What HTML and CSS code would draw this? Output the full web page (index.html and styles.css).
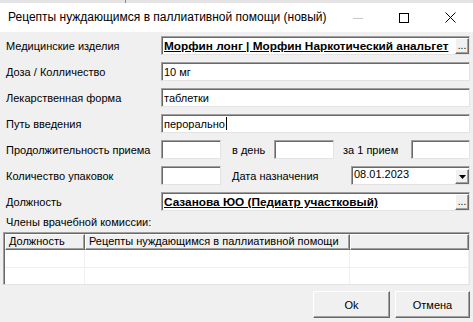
FILE: index.html
```html
<!DOCTYPE html>
<html lang="ru">
<head>
    <meta charset="UTF-8">
    <title>Рецепты нуждающимся в паллиативной помощи (новый)</title>
    <link rel="stylesheet" href="styles.css">
</head>
<body>
    <div class="window">
        <div class="behind"><span class="behind-line"></span></div>
        <div class="titlebar">
            <span class="title">Рецепты нуждающимся в паллиативной помощи (новый)</span>
            <div class="controls">
                <span class="ctl ctl-min">
                    <svg width="10" height="10" viewBox="0 0 10 10"><path d="M0 5.5h10" stroke="#c8c8c8" stroke-width="1"/></svg>
                </span>
                <span class="ctl">
                    <svg width="10" height="10" viewBox="0 0 10 10"><rect x="0.5" y="0.5" width="9" height="9" fill="none" stroke="#000" stroke-width="1"/></svg>
                </span>
                <span class="ctl">
                    <svg width="11" height="11" viewBox="0 0 11 11"><path d="M0.5 0.5l10 10M10.5 0.5l-10 10" stroke="#000" stroke-width="1"/></svg>
                </span>
            </div>
        </div>

        <div class="form">
            <div class="row">
                <span class="label">Медицинские изделия</span>
                <div class="field lookup">
                    <span class="link">Морфин лонг | Морфин Наркотический анальгет</span>
                    <span class="dots">...</span>
                </div>
            </div>
            <div class="row">
                <span class="label">Доза / Колличество</span>
                <div class="field">10 мг</div>
            </div>
            <div class="row">
                <span class="label">Лекарственная форма</span>
                <div class="field">таблетки</div>
            </div>
            <div class="row">
                <span class="label">Путь введения</span>
                <div class="field">перорально<span class="caret"></span></div>
            </div>
            <div class="row">
                <span class="label">Продолжительность приема</span>
                <div class="field small"></div>
                <span class="inline-label">в день</span>
                <div class="field small"></div>
                <span class="inline-label wide">за 1 прием</span>
                <div class="field small last"></div>
            </div>
            <div class="row">
                <span class="label">Количество упаковок</span>
                <div class="field small"></div>
                <span class="inline-label date-label">Дата назначения</span>
                <div class="field date">
                    <span class="date-text">08.01.2023</span>
                    <span class="drop">
                        <svg width="7" height="4" viewBox="0 0 7 4"><path d="M0 0h7L3.5 4z" fill="#000"/></svg>
                    </span>
                </div>
            </div>
            <div class="row">
                <span class="label">Должность</span>
                <div class="field lookup">
                    <span class="link">Сазанова ЮО (Педиатр участковый)</span>
                    <span class="dots">...</span>
                </div>
            </div>

            <div class="section-label">Члены врачебной комиссии:</div>

            <div class="grid">
                <div class="grid-head">
                    <span class="col col-1">Должность</span>
                    <span class="col col-2">Рецепты нуждающимся в паллиативной помощи</span>
                    <span class="col col-3"></span>
                </div>
                <div class="grid-row">
                    <span class="cell col-1"></span>
                    <span class="cell col-2"></span>
                    <span class="cell col-3"></span>
                </div>
                <div class="grid-row">
                    <span class="cell col-1"></span>
                    <span class="cell col-2"></span>
                    <span class="cell col-3"></span>
                </div>
            </div>

            <div class="buttons">
                <button class="btn btn-ok">Ok</button>
                <button class="btn btn-cancel">Отмена</button>
            </div>
        </div>
    </div>
</body>
</html>
```

FILE: styles.css
```css
body {
    margin: 0;
    font-family: 'Liberation Sans', Arial, sans-serif;
    font-size: 11px;
    color: #000;
    background-color: #f0f0f0;
}

.window {
    width: 473px;
    height: 322px;
    background-color: #f0f0f0;
    overflow: hidden;
}

.behind {
    height: 3px;
    background-color: #e4e4e4;
    position: relative;
}

.behind-line {
    position: absolute;
    left: 125px;
    top: 0;
    width: 1px;
    height: 3px;
    background-color: #8a8a8a;
}

.titlebar {
    height: 29px;
    background-color: #fff;
    display: flex;
    align-items: center;
    padding-left: 8px;
}

.title {
    font-family: 'Liberation Sans', Arial, sans-serif;
    font-size: 12px;
    flex: 1;
    white-space: nowrap;
    padding-bottom: 1px;
}

.controls {
    display: flex;
    align-items: center;
}

.ctl {
    width: 46px;
    height: 29px;
    display: flex;
    align-items: center;
    justify-content: center;
}

.form {
    padding: 4px 3px 0 6px;
}

.row {
    display: flex;
    align-items: center;
    height: 19px;
    margin-bottom: 7px;
}

.label {
    width: 155px;
    flex-shrink: 0;
}

.field {
    flex: 1;
    height: 19px;
    box-sizing: border-box;
    background-color: #fff;
    border: 1px solid;
    border-color: #a0a0a0 #e3e3e3 #e3e3e3 #a0a0a0;
    box-shadow: inset 1px 1px 0 #696969;
    padding: 2px 0 0 2px;
    line-height: 14px;
    white-space: nowrap;
    overflow: hidden;
    display: flex;
    align-items: flex-start;
}

.caret {
    display: inline-block;
    width: 1px;
    height: 13px;
    background-color: #000;
    margin-left: 1px;
}

.lookup {
    padding-right: 0;
}

.link {
    flex: 1;
    min-width: 0;
    font-size: 11.8px;
    font-weight: bold;
    text-decoration: underline;
    white-space: nowrap;
}

.dots {
    width: 14px;
    height: 16px;
    margin-top: -1px;
    box-sizing: border-box;
    flex-shrink: 0;
    background-color: #f0f0f0;
    border: 1px solid;
    border-color: #fff #696969 #696969 #fff;
    box-shadow: inset -1px -1px 0 #a0a0a0;
    font-size: 10px;
    line-height: 14px;
    text-align: center;
    color: #000;
}

.field.small {
    flex: 0 0 60px;
}

.field.last {
    flex-basis: 59px;
}

.inline-label {
    margin-left: 11px;
    width: 42px;
}

.inline-label.wide {
    margin-left: 9px;
    width: 68px;
}

.inline-label.date-label {
    width: 119px;
}

.field.date {
    padding-right: 0;
}

.date-text {
    flex: 1;
    font-size: 11px;
    line-height: 13px;
    margin-top: -1px;
}

.drop {
    width: 14px;
    height: 15px;
    box-sizing: border-box;
    flex-shrink: 0;
    background-color: #f0f0f0;
    border: 1px solid;
    border-color: #fff #696969 #696969 #fff;
    box-shadow: inset -1px -1px 0 #a0a0a0;
    display: flex;
    align-items: center;
    justify-content: center;
}

.section-label {
    margin-top: -3px;
    height: 17px;
    line-height: 14px;
}

.grid {
    margin-left: -3px;
    height: 53px;
    box-sizing: border-box;
    background-color: #fff;
    border: 1px solid;
    border-color: #a0a0a0 #e3e3e3 #e3e3e3 #a0a0a0;
    box-shadow: inset 1px 1px 0 #696969;
    padding: 1px 0 0 1px;
    overflow: hidden;
}

.grid-head {
    display: flex;
    height: 16px;
    background-color: #f0f0f0;
}

.grid-head .col {
    box-sizing: border-box;
    border: 1px solid;
    border-color: #fff #696969 #696969 #fff;
    box-shadow: inset -1px -1px 0 #a0a0a0;
    padding-left: 3px;
    line-height: 13px;
    white-space: nowrap;
}

.col-1 {
    width: 80px;
    flex-shrink: 0;
}

.col-2 {
    width: 265px;
    flex-shrink: 0;
}

.col-3 {
    flex: 1;
}

.grid-row {
    display: flex;
    height: 18px;
}

.cell {
    box-sizing: border-box;
    border-right: 1px solid #f0f0f0;
    border-bottom: 1px solid #f0f0f0;
}

.buttons {
    display: flex;
    justify-content: flex-end;
    gap: 5px;
    margin-top: 6px;
}

.btn {
    height: 27px;
    font-family: 'Liberation Sans', Arial, sans-serif;
    font-size: 11px;
    color: #000;
    background-color: #f0f0f0;
    border: 1px solid;
    border-color: #fff #696969 #696969 #fff;
    box-shadow: inset -1px -1px 0 #a0a0a0;
    padding: 0;
}

.btn-ok {
    width: 77px;
}

.btn-cancel {
    width: 75px;
}
```
